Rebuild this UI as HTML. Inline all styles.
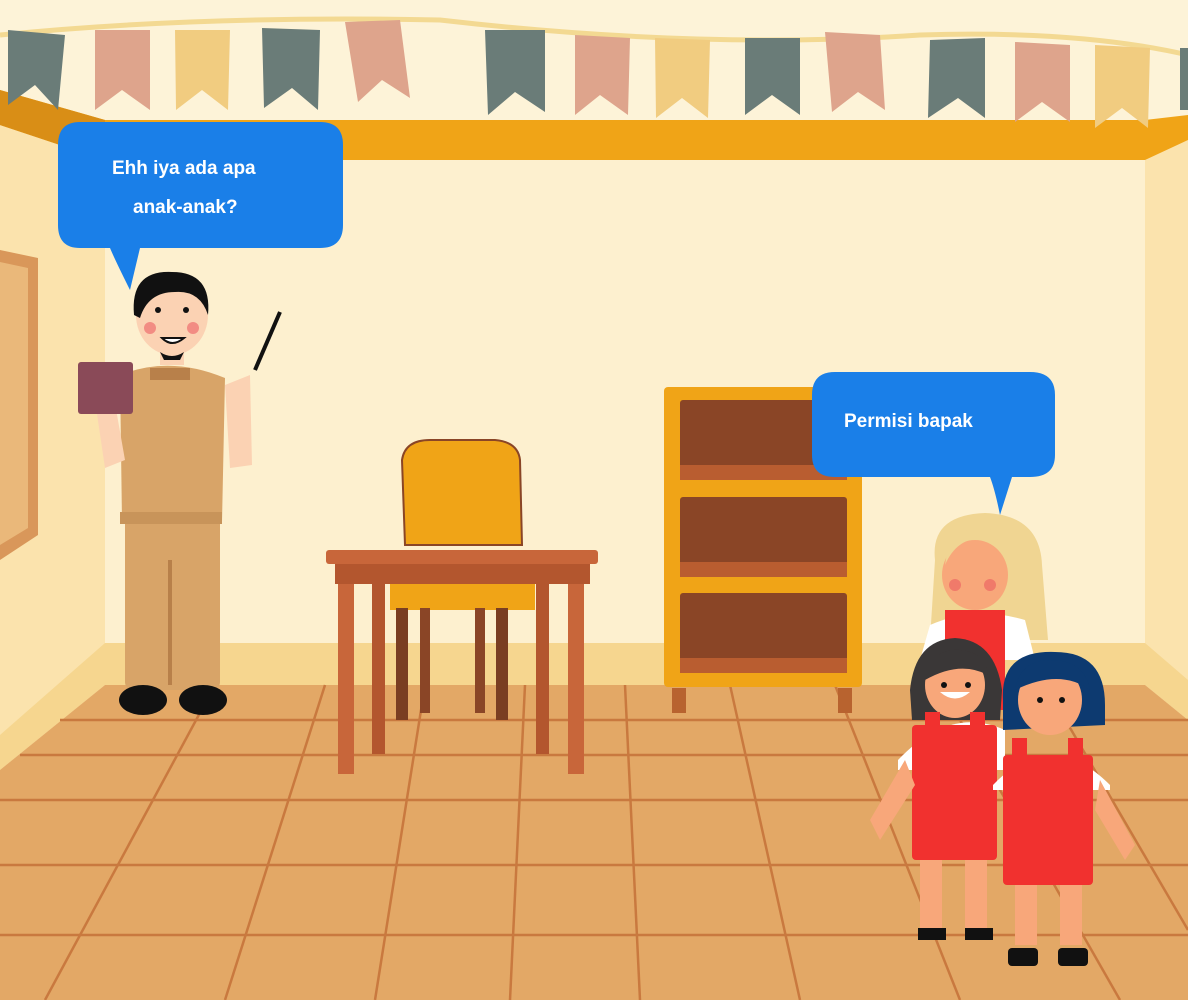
<!DOCTYPE html>
<html><head><meta charset="utf-8"><style>
html,body{margin:0;padding:0;width:1188px;height:1000px;overflow:hidden;background:#fdf0cf}
svg{display:block}
text{font-family:"Liberation Sans",sans-serif;font-weight:bold;fill:#fff;font-size:19px}
</style></head><body>
<svg width="1188" height="1000" viewBox="0 0 1188 1000" xmlns="http://www.w3.org/2000/svg">
<rect x="0" y="0" width="1188" height="130" fill="#fdf3d8"/>
<rect x="105" y="155" width="1040" height="500" fill="#fdf0cf"/>
<polygon points="0,95 105,155 105,685 0,770" fill="#fbe3ad"/>
<polygon points="1145,155 1188,140 1188,720 1145,685" fill="#fbe3ad"/>
<polygon points="0,90 105,120 1145,120 1188,115 1188,140 1145,160 105,160 0,125" fill="#f0a417"/>
<polygon points="0,90 105,120 105,160 0,125" fill="#d98e16"/>
<rect x="105" y="643" width="1040" height="42" fill="#f6d68f"/>
<polygon points="0,735 105,643 105,685 0,770" fill="#f6d68f"/>
<polygon points="1145,643 1188,680 1188,720 1145,685" fill="#f6d68f"/>
<polygon points="105,685 1145,685 1188,720 1188,1000 0,1000 0,770" fill="#e3a866"/>
<g stroke="#c9793f" stroke-width="2.5" fill="none">
<line x1="60" y1="720" x2="1188" y2="720"/><line x1="20" y1="755" x2="1188" y2="755"/>
<line x1="0" y1="800" x2="1188" y2="800"/><line x1="0" y1="865" x2="1188" y2="865"/>
<line x1="0" y1="935" x2="1188" y2="935"/>
<line x1="215" y1="685" x2="45" y2="1000"/><line x1="325" y1="685" x2="225" y2="1000"/>
<line x1="425" y1="685" x2="375" y2="1000"/><line x1="525" y1="685" x2="510" y2="1000"/>
<line x1="625" y1="685" x2="640" y2="1000"/><line x1="730" y1="685" x2="800" y2="1000"/>
<line x1="835" y1="685" x2="960" y2="1000"/><line x1="940" y1="685" x2="1120" y2="1000"/>
<line x1="1045" y1="685" x2="1188" y2="930"/>
</g>
<polygon points="0,250 38,258 38,535 0,560" fill="#d9975a"/>
<polygon points="0,262 28,268 28,528 0,545" fill="#eab87a"/>
<path d="M0,35 Q200,15 440,20 Q700,50 920,35 Q1080,30 1188,55" stroke="#f3d992" stroke-width="5" fill="none"/>
<g>
<polygon points="8,30 65,35 58,110 35,85 8,105" fill="#6a7c78"/>
<polygon points="95,30 150,30 150,110 122,90 95,110" fill="#dea48c"/>
<polygon points="175,30 230,30 228,110 202,90 176,110" fill="#f1cc80"/>
<polygon points="262,28 320,30 318,110 292,88 264,108" fill="#6a7c78"/>
<polygon points="345,22 400,20 410,98 382,80 358,102" fill="#dea48c"/>
<polygon points="485,30 545,30 545,112 515,92 488,115" fill="#6a7c78"/>
<polygon points="575,35 630,38 628,115 600,95 575,115" fill="#dea48c"/>
<polygon points="655,38 710,40 708,118 682,98 656,118" fill="#f1cc80"/>
<polygon points="745,38 800,38 800,115 772,95 745,115" fill="#6a7c78"/>
<polygon points="825,32 880,35 885,110 858,92 832,112" fill="#dea48c"/>
<polygon points="930,40 985,38 985,118 958,98 928,118" fill="#6a7c78"/>
<polygon points="1015,42 1070,45 1070,122 1042,102 1015,122" fill="#dea48c"/>
<polygon points="1095,45 1150,48 1148,128 1122,108 1095,128" fill="#f1cc80"/>
<polygon points="1180,48 1188,48 1188,110 1180,110" fill="#6a7c78"/>
</g>
<rect x="664" y="387" width="198" height="300" rx="4" fill="#f0a417"/>
<rect x="672" y="688" width="14" height="25" fill="#b8632f"/><rect x="838" y="688" width="14" height="25" fill="#b8632f"/>
<g fill="#8a4526">
<rect x="680" y="400" width="167" height="80" rx="3"/>
<rect x="680" y="497" width="167" height="80" rx="3"/>
<rect x="680" y="593" width="167" height="80" rx="3"/>
</g>
<g fill="#b95d30"><rect x="680" y="465" width="167" height="15"/><rect x="680" y="562" width="167" height="15"/><rect x="680" y="658" width="167" height="15"/></g>
<path d="M405,545 L402,460 Q405,440 430,440 L495,440 Q518,442 520,460 L522,545 Z" fill="#f0a417" stroke="#8a4526" stroke-width="2"/>
<rect x="390" y="580" width="145" height="30" fill="#f0a417"/>
<rect x="396" y="608" width="12" height="112" fill="#7a3e22"/><rect x="496" y="608" width="12" height="112" fill="#7a3e22"/>
<rect x="420" y="608" width="10" height="105" fill="#8a4526"/><rect x="475" y="608" width="10" height="105" fill="#8a4526"/>
<rect x="326" y="550" width="272" height="14" rx="3" fill="#c8663a"/>
<rect x="335" y="564" width="255" height="20" fill="#b3562e"/>
<rect x="338" y="584" width="16" height="190" fill="#c8663a"/>
<rect x="568" y="584" width="16" height="190" fill="#c8663a"/>
<rect x="372" y="584" width="13" height="170" fill="#b3562e"/>
<rect x="536" y="584" width="13" height="170" fill="#b3562e"/>
<g>
<rect x="125" y="515" width="95" height="175" rx="8" fill="#d8a468"/>
<rect x="168" y="560" width="4" height="125" fill="#b8804a"/>
<ellipse cx="143" cy="700" rx="24" ry="15" fill="#111"/><ellipse cx="203" cy="700" rx="24" ry="15" fill="#111"/>
<path d="M120,375 Q170,355 225,378 L222,522 L122,522 Z" fill="#d8a468"/>
<rect x="120" y="512" width="102" height="12" fill="#c8945a"/>
<path d="M92,380 L110,375 L125,460 L105,468 Z" fill="#fbd2b3"/>
<path d="M225,385 L250,375 L252,465 L230,468 Z" fill="#fbd2b3"/>
<rect x="78" y="362" width="55" height="52" rx="3" fill="#8a4a58"/>
<line x1="255" y1="370" x2="280" y2="312" stroke="#111" stroke-width="4"/>
<rect x="160" y="340" width="24" height="25" fill="#fbd2b3"/>
<ellipse cx="172" cy="315" rx="36" ry="40" fill="#fbd2b3"/>
<path d="M134,315 Q130,270 172,272 Q212,272 208,315 Q200,290 175,292 Q148,292 140,318 Z" fill="#111"/>
<circle cx="158" cy="310" r="3" fill="#111"/><circle cx="186" cy="310" r="3" fill="#111"/>
<circle cx="150" cy="328" r="6" fill="#f28c83"/><circle cx="193" cy="328" r="6" fill="#f28c83"/>
<path d="M162,338 Q172,348 184,338 Z" fill="#fff" stroke="#111" stroke-width="2"/>
<path d="M160,352 Q172,360 184,352 L180,360 L164,360 Z" fill="#111"/>
<rect x="150" y="368" width="40" height="12" fill="#b8804a"/>
</g>
<g>
<path d="M935,560 Q930,515 985,513 Q1040,515 1042,565 L1048,640 L930,640 Z" fill="#f0d592"/>
<ellipse cx="975" cy="575" rx="33" ry="35" fill="#f8a77a"/>
<path d="M945,565 Q960,530 1000,540 Q1005,555 1015,560 L1012,540 Q990,520 950,535 Z" fill="#f0d592"/>
<circle cx="955" cy="585" r="6" fill="#f07a6a"/><circle cx="990" cy="585" r="6" fill="#f07a6a"/>
<path d="M930,625 Q975,605 1025,620 L1035,660 L920,660 Z" fill="#fff"/>
<rect x="945" y="610" width="60" height="100" fill="#f1312f"/>
</g>
<g>
<path d="M910,690 Q915,640 955,638 Q995,640 1002,690 L1000,720 L912,720 Z" fill="#3a3737"/>
<ellipse cx="955" cy="685" rx="30" ry="33" fill="#f8a77a"/>
<path d="M925,680 Q930,648 960,650 Q985,652 988,675 Q960,660 925,680Z" fill="#3a3737"/>
<circle cx="944" cy="685" r="3" fill="#111"/><circle cx="968" cy="685" r="3" fill="#111"/>
<path d="M940,692 Q955,705 970,692 Z" fill="#fff"/>
<path d="M898,760 Q950,705 1005,730 L1005,770 L898,770 Z" fill="#fff"/>
<rect x="912" y="725" width="85" height="135" rx="4" fill="#f1312f"/>
<rect x="925" y="712" width="15" height="20" fill="#f1312f"/><rect x="970" y="712" width="15" height="20" fill="#f1312f"/>
<rect x="920" y="860" width="22" height="68" fill="#f8a77a"/><rect x="965" y="860" width="22" height="68" fill="#f8a77a"/>
<rect x="918" y="928" width="28" height="12" fill="#111"/><rect x="965" y="928" width="28" height="12" fill="#111"/>
<path d="M905,760 L870,820 L880,840 L915,785 Z" fill="#f8a77a"/>
</g>
<g>
<path d="M1003,700 Q1000,650 1055,652 Q1105,652 1105,705 L1105,725 L1003,730 Z" fill="#0d3a70"/>
<ellipse cx="1050" cy="700" rx="32" ry="35" fill="#f8a77a"/>
<path d="M1015,690 Q1020,660 1050,660 Q1085,660 1090,690 Q1060,668 1015,690Z" fill="#0d3a70"/>
<circle cx="1040" cy="700" r="3" fill="#111"/><circle cx="1062" cy="700" r="3" fill="#111"/>
<path d="M993,785 Q1050,725 1110,785 L1110,790 L993,790 Z" fill="#fff"/>
<rect x="1003" y="755" width="90" height="130" rx="4" fill="#f1312f"/>
<rect x="1012" y="738" width="15" height="22" fill="#f1312f"/><rect x="1068" y="738" width="15" height="22" fill="#f1312f"/>
<rect x="1015" y="885" width="22" height="60" fill="#f8a77a"/><rect x="1060" y="885" width="22" height="60" fill="#f8a77a"/>
<rect x="1008" y="948" width="30" height="18" rx="4" fill="#111"/><rect x="1058" y="948" width="30" height="18" rx="4" fill="#111"/>
<path d="M1100,780 L1135,845 L1125,860 L1095,810 Z" fill="#f8a77a"/>
</g>
<path d="M80,122 L320,122 Q343,122 343,145 L343,225 Q343,248 320,248 L140,248 L130,290 Q115,260 110,248 L80,248 Q58,248 58,225 L58,145 Q58,122 80,122 Z" fill="#1a7fe8"/>
<text x="112" y="174">Ehh iya ada apa</text>
<text x="133" y="213">anak-anak?</text>
<path d="M835,372 L1030,372 Q1055,372 1055,395 L1055,455 Q1055,477 1030,477 L1012,477 L1000,515 Q995,490 990,477 L835,477 Q812,477 812,455 L812,395 Q812,372 835,372 Z" fill="#1a7fe8"/>
<text x="844" y="427">Permisi bapak</text>
</svg>
</body></html>
